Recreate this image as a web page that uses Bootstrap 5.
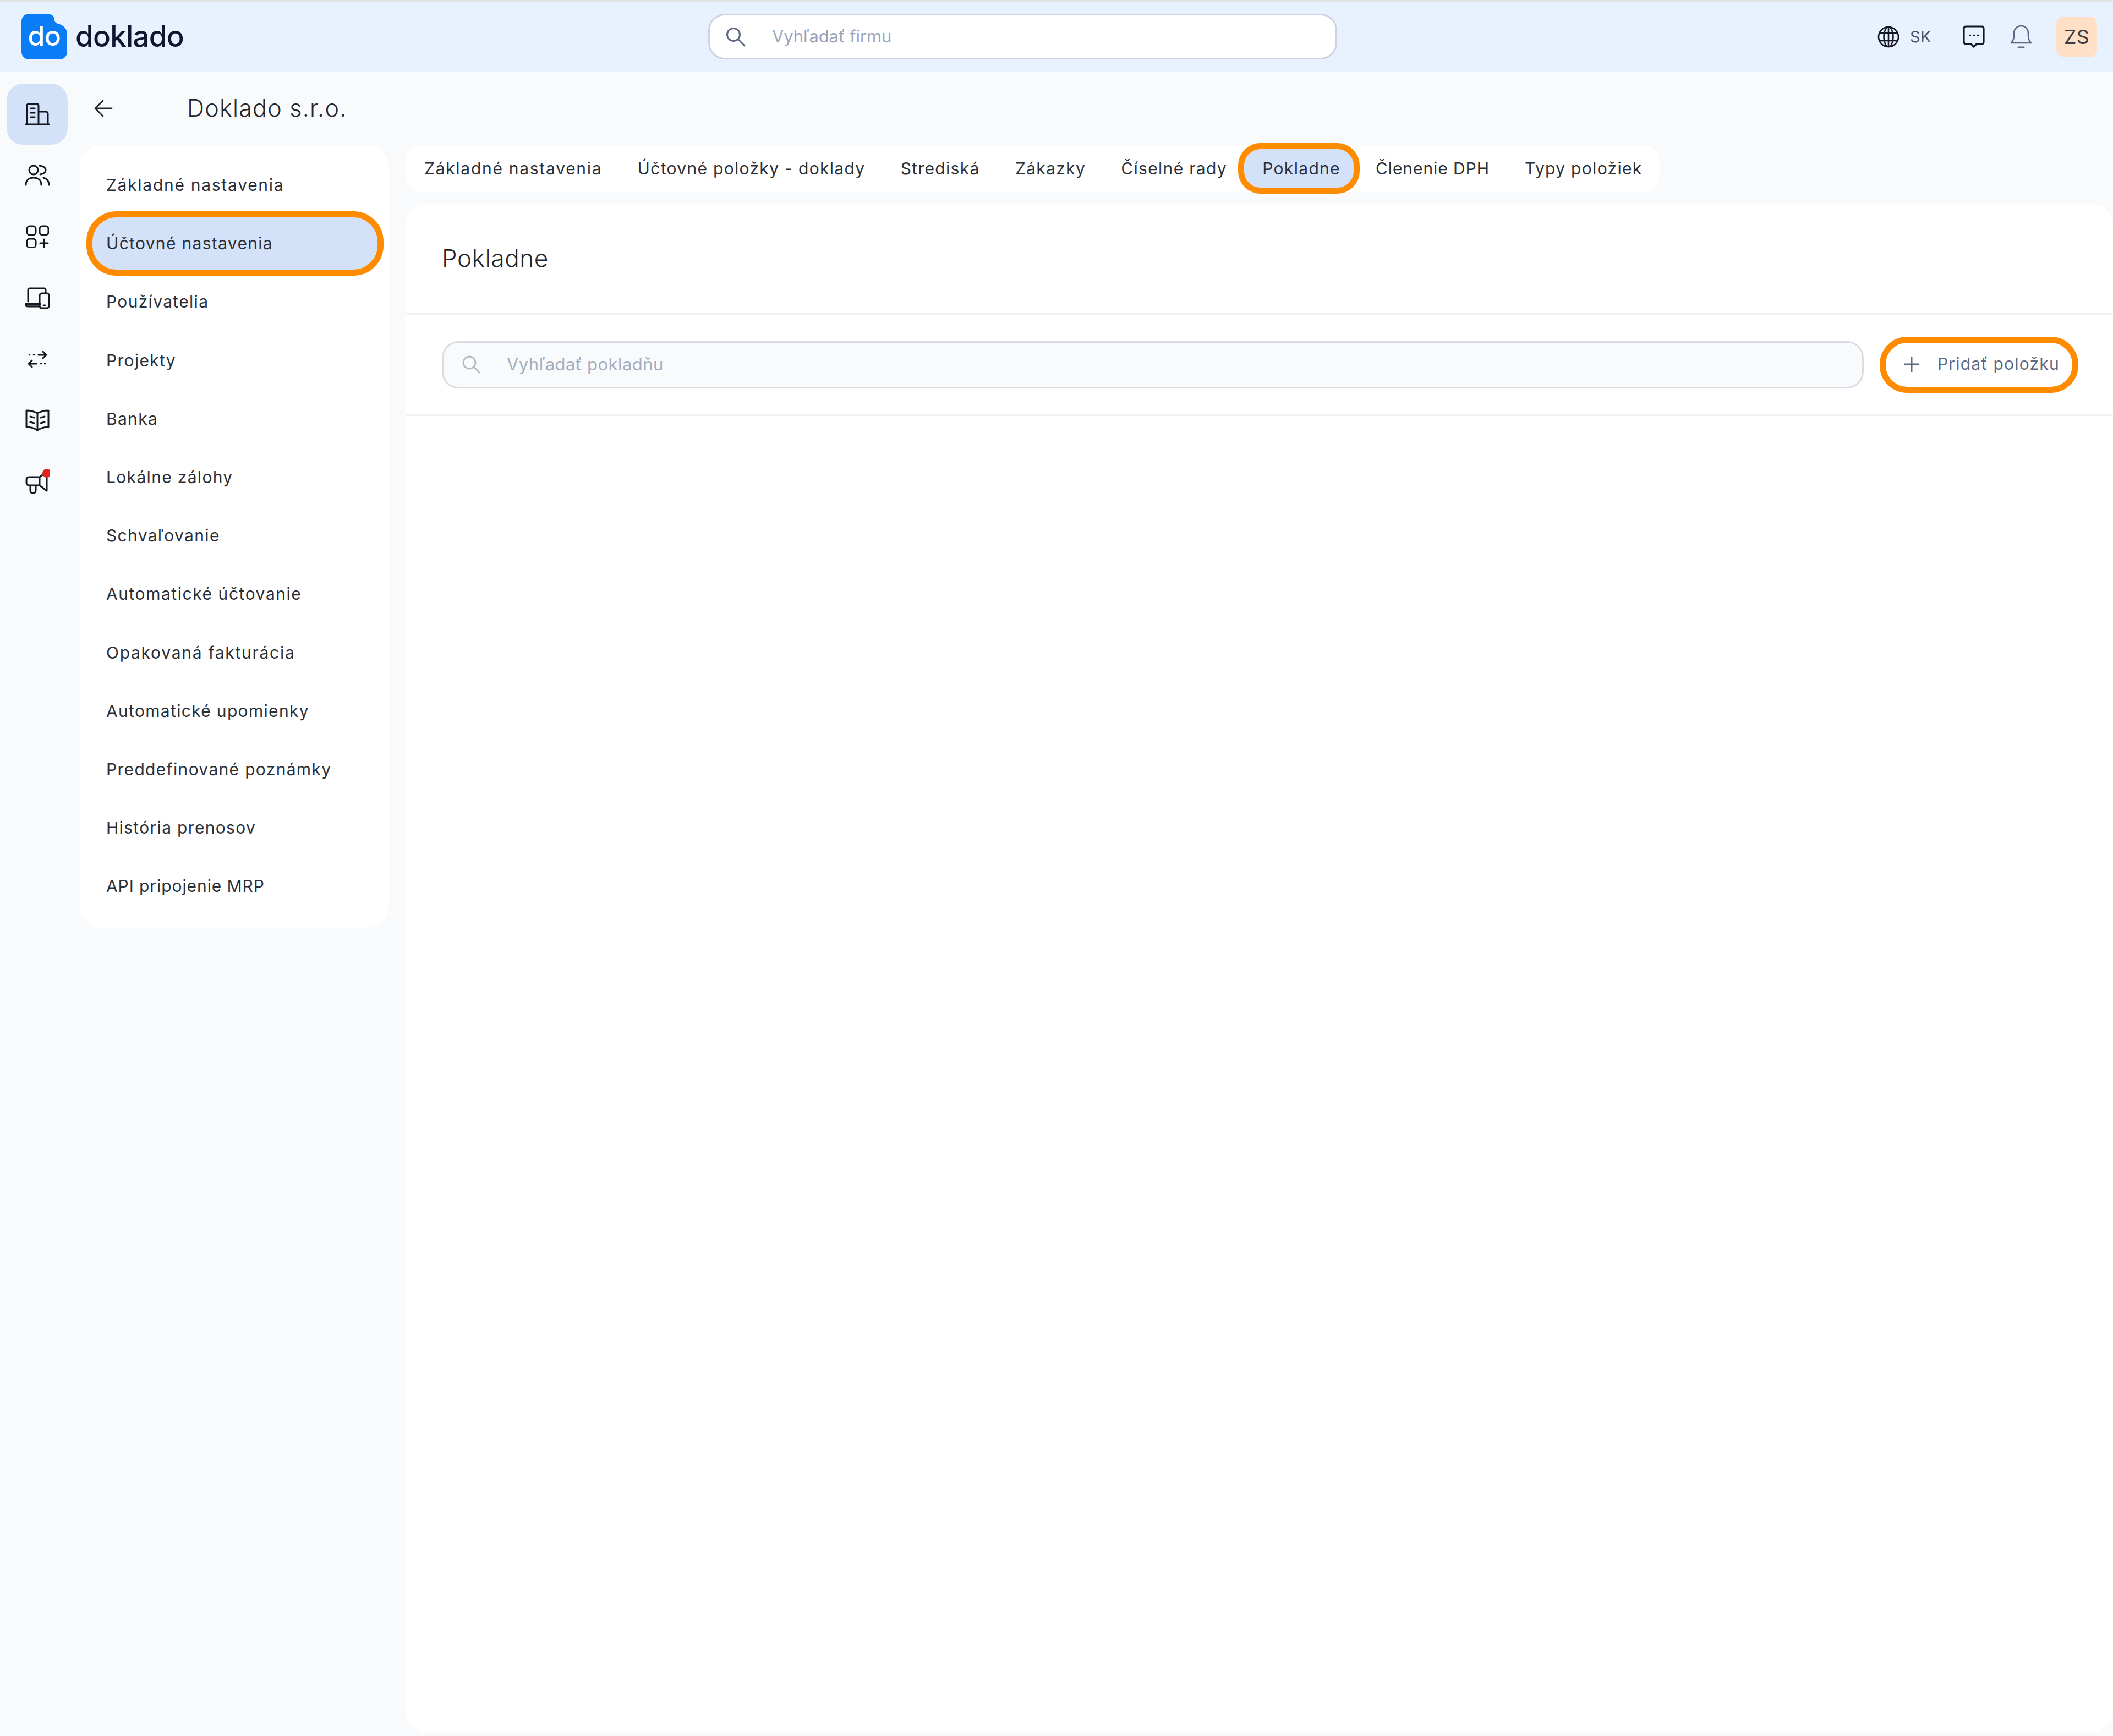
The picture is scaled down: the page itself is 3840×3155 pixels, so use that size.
<!DOCTYPE html>
<html lang="sk">
<head>
<meta charset="utf-8">
<title>Doklado</title>
<link href="https://cdn.jsdelivr.net/npm/bootstrap@5.3.0/dist/css/bootstrap.min.css" rel="stylesheet">
<style>
html,body{height:100%;overflow:hidden}
body{background:#f8fafc;font-family:"Inter","Liberation Sans",sans-serif;color:#2b2f38;border-top:3px solid #e3e4e6}
.topbar{height:127px;background:#e8f2fe;padding:0 29px 0 39px;flex:none}
.brand-box{width:1248px;flex:none}
.brand-name{font-size:53px;font-weight:500;color:#0e1730;letter-spacing:-.8px;margin-left:15px;line-height:1}
.head-search{width:1143px;height:83px;flex:none;background:#fff;border:3px solid #cdd3e2;border-radius:30px;padding:0 29px}
.head-search input,.cash-search input{border:0;outline:0;background:transparent;flex:1;min-width:0;font-size:31px;font-family:inherit}
.head-search input{margin-left:46px;color:#9aa3ba;letter-spacing:-.1px}
.head-search input::placeholder{color:#9aa3ba;opacity:1}
.lang-code{font-size:29px;color:#4d5468;margin-left:19px;margin-right:57px;letter-spacing:.5px}
.bell-mark{margin-left:46px}
.user-tile{width:74px;height:74px;background:#ffe0c7;border-radius:14px;font-size:36px;color:#3b3d42;margin-left:44px;letter-spacing:.5px}
.page-row{flex:1;min-height:0}
.rail{width:145px;flex:none;padding:22px 0 0 12px}
.rail-tile{width:111px;height:111.3px;border-radius:30px;color:#14171f}
.rail-tile.is-current{background:#d4e2f9}
.rail-tile svg{fill:none;stroke:currentColor;stroke-width:3;stroke-linecap:round;stroke-linejoin:round}
.work{flex:1;min-width:0}
.title-row{height:133px;flex:none;padding-left:26px}
.title-text{font-size:43px;font-weight:300;letter-spacing:1.25px;margin:0 0 0 135px;color:#23262e}
.side-panel{width:562px;height:1423px;flex:none;background:#fff;border-radius:40px;padding:26px 21px 0 23px;margin-right:31px}
.side-panel .nav-link,.tab-strip .nav-link{color:#2b2f38;font-size:30px;letter-spacing:1.32px;white-space:nowrap;padding:0}
.side-panel .nav-link{height:95px;margin-bottom:11.2px;line-height:95px;padding-left:25px;border-radius:44px}
.nav-pills .nav-link.active{background:#d4e2f9;color:#2b2f38;outline:11px solid #ff8c00}
.side-panel .nav-link.wide-set,.tab-strip .nav-link.wide-set{letter-spacing:1.72px}
.side-panel .nav-link.mid-set{letter-spacing:1.55px}
.side-panel .nav-link.tight-set,.tab-strip .nav-link.tight-set{letter-spacing:.92px}
.right-col{flex:1;min-width:0;padding-bottom:7px}
.tab-strip{align-self:flex-start;height:86px;background:#fff;border-radius:30px;align-items:center;margin-bottom:21px;flex-wrap:nowrap}
.tab-strip .nav-link{height:70px;line-height:70px;padding:0 31.2px 0 33px;border-radius:30px}
.tab-strip .nav-link.active{padding-right:24px;margin-right:7px}
.main-panel{flex:1;border:0;border-radius:40px;background:#fff;overflow:visible}
.panel-head{height:202px;border-bottom:3px solid #f2f3f5;padding-left:65px}
.panel-title{font-size:44px;font-weight:300;letter-spacing:.6px;margin:0;color:#23262e}
.panel-tools{height:184px;border-bottom:3px solid #f2f3f5;padding:0 63px 0 65px}
.cash-search{flex:1;height:86px;background:#f8fafc;border:3px solid #dadee4;border-radius:30px;padding:0 34px}
.cash-search input{margin-left:46px;color:#a3acbf;letter-spacing:.45px}
.cash-search input::placeholder{color:#a3acbf;opacity:1}
.add-btn{width:361px;height:102px;margin-left:29px;background:#fff;border:11px solid #ff8c00;border-radius:50px;color:#5f6883;font-size:30px;letter-spacing:1.2px;padding:0 0 2px 33px;flex:none;white-space:nowrap;--bs-btn-hover-border-color:#ff8c00;--bs-btn-hover-bg:#fff;--bs-btn-hover-color:#5f6883}
.add-btn svg{margin-right:33px}
</style>
</head>
<body class="d-flex flex-column">
<header class="topbar d-flex align-items-center">
  <div class="brand-box d-flex align-items-center">
    <svg width="83" height="83" viewBox="0 0 83 83"><path d="M14 0H47C55 0 60 5 60 11C60 15 63 17 66 18C76 20 83 27 83 37V69C83 77 77 83 69 83H14C6 83 0 77 0 69V14C0 6 6 0 14 0Z" fill="#0a7cf5"/><text x="41.5" y="58" text-anchor="middle" font-family="Inter, sans-serif" font-size="50" font-weight="500" letter-spacing="-.5" fill="#fff">do</text></svg>
    <span class="brand-name">doklado</span>
  </div>
  <div class="head-search d-flex align-items-center">
    <svg width="36" height="36" viewBox="0 0 36 36" fill="none" stroke="#5f6883" stroke-width="3" stroke-linecap="round"><circle cx="14" cy="14" r="11.5"/><path d="M23 23L34 34"/></svg>
    <input type="text" placeholder="Vyhľadať firmu" aria-label="Vyhľadať firmu">
  </div>
  <div class="ms-auto d-flex align-items-center">
    <svg width="40" height="40" viewBox="0 0 40 40" fill="none" stroke="#14171f" stroke-width="2.6"><circle cx="20" cy="20" r="18"/><ellipse cx="20" cy="20" rx="8.5" ry="18"/><path d="M20 2V38M3.5 13H36.5M3.5 27H36.5"/></svg>
    <span class="lang-code">SK</span>
    <svg width="40" height="42" viewBox="0 0 40 42" fill="none" stroke="#14171f" stroke-width="3.2" stroke-linejoin="round"><path d="M6 2H34Q38 2 38 6V30Q38 34 34 34H25L20 39L15 34H6Q2 34 2 30V6Q2 2 6 2Z"/><path d="M13 18H14M20 18H21M27 18H28" stroke-linecap="round" stroke-width="2.4"/></svg>
    <svg class="bell-mark" width="40" height="43" viewBox="0 0 40 43" fill="none" stroke="#5f6883" stroke-width="2.6" stroke-linecap="round" stroke-linejoin="round"><path d="M2 33C6 29 7 25 7 16C7 7 13 2 20 2C27 2 33 7 33 16C33 25 34 29 38 33Z"/><path d="M15 41H25" stroke-width="3"/></svg>
    <div class="user-tile d-flex align-items-center justify-content-center">ZS</div>
  </div>
</header>

<div class="page-row d-flex">
  <nav class="rail d-flex flex-column" aria-label="Hlavné menu">
    <a class="rail-tile is-current d-flex align-items-center justify-content-center" href="#" aria-label="Firmy">
      <svg width="44" height="40" viewBox="0 0 44 40"><path d="M1 38H43M3 38V4Q3 1 6 1H21Q24 1 24 4V38M24 15H37Q41 15 41 19V38M10 9H17M10 17H17M10 25H17"/></svg>
    </a>
    <a class="rail-tile d-flex align-items-center justify-content-center" href="#" aria-label="Používatelia">
      <svg width="44" height="38" viewBox="0 0 44 38"><circle cx="15" cy="9" r="8"/><path d="M26 1C34 2 37 6 37 9C37 13 33 16 27 17M1 36C1 27 7 23 15 23C23 23 29 27 29 36M33 23C39 25 43 29 43 36"/></svg>
    </a>
    <a class="rail-tile d-flex align-items-center justify-content-center" href="#" aria-label="Moduly">
      <svg width="42" height="42" viewBox="0 0 42 42"><rect x="2" y="2" width="16" height="16" rx="5"/><rect x="25" y="2" width="16" height="16" rx="5"/><rect x="2" y="25" width="16" height="16" rx="5"/><path d="M33 26V40M26 33H40"/></svg>
    </a>
    <a class="rail-tile d-flex align-items-center justify-content-center" href="#" aria-label="Zariadenia">
      <svg width="44" height="40" viewBox="0 0 44 40"><path d="M5 26V5Q5 2 8 2H34Q37 2 37 5V10M26 30H4Q1 30 1 32.5Q1 35 4 35H26"/><path d="M2 31H26" stroke-width="5"/><rect x="26" y="11" width="17" height="27" rx="4"/><path d="M33 33H36"/></svg>
    </a>
    <a class="rail-tile d-flex align-items-center justify-content-center" href="#" aria-label="Prenosy">
      <svg width="36" height="32" viewBox="0 0 36 32"><path d="M20 8H34M28 2L34 8L28 14M2 24H16M8 18L2 24L8 30"/><path d="M3 8H4M11 8H12M24 24H25M31 24H32" stroke-width="2.6"/></svg>
    </a>
    <a class="rail-tile d-flex align-items-center justify-content-center" href="#" aria-label="Príručka">
      <svg width="44" height="40" viewBox="0 0 44 40"><path d="M22 7Q13 2 2 2V32Q13 32 22 38Q31 32 42 32V2Q31 2 22 7ZM22 7V38M9 13L16 15M9 23L16 25M35 13L28 15M35 23L28 25"/></svg>
    </a>
    <a class="rail-tile d-flex align-items-center justify-content-center position-relative" href="#" aria-label="Novinky">
      <svg width="44" height="46" viewBox="0 0 44 46"><path d="M26 15H7Q2 15 2 20V25Q2 30 7 30H26ZM26 15L39 5V40L26 30M9 30V39Q9 44 14 44Q19 44 19 39V30"/><circle cx="39" cy="8" r="8" fill="#e3241b" stroke="none"/></svg>
    </a>
  </nav>

  <div class="work d-flex flex-column">
    <div class="title-row d-flex align-items-center">
      <svg width="34" height="32" viewBox="0 0 34 32" fill="none" stroke="#23262e" stroke-width="2.8" stroke-linecap="round" stroke-linejoin="round"><path d="M32 16H3M16 2L2 16L16 30"/></svg>
      <h1 class="title-text">Doklado s.r.o.</h1>
    </div>
    <div class="d-flex flex-grow-1">
      <aside class="side-panel">
        <nav class="nav nav-pills flex-column">
          <a class="nav-link wide-set" href="#">Základné nastavenia</a>
          <a class="nav-link active" href="#">Účtovné nastavenia</a>
          <a class="nav-link" href="#">Používatelia</a>
          <a class="nav-link" href="#">Projekty</a>
          <a class="nav-link" href="#">Banka</a>
          <a class="nav-link" href="#">Lokálne zálohy</a>
          <a class="nav-link" href="#">Schvaľovanie</a>
          <a class="nav-link mid-set" href="#">Automatické účtovanie</a>
          <a class="nav-link wide-set" href="#">Opakovaná fakturácia</a>
          <a class="nav-link" href="#">Automatické upomienky</a>
          <a class="nav-link" href="#">Preddefinované poznámky</a>
          <a class="nav-link" href="#">História prenosov</a>
          <a class="nav-link tight-set" href="#">API pripojenie MRP</a>
        </nav>
      </aside>
      <main class="right-col d-flex flex-column">
        <nav class="tab-strip nav nav-pills">
          <a class="nav-link wide-set" href="#">Základné nastavenia</a>
          <a class="nav-link" href="#">Účtovné položky - doklady</a>
          <a class="nav-link" href="#">Strediská</a>
          <a class="nav-link" href="#">Zákazky</a>
          <a class="nav-link" href="#">Číselné rady</a>
          <a class="nav-link active" href="#">Pokladne</a>
          <a class="nav-link tight-set" href="#">Členenie DPH</a>
          <a class="nav-link" href="#">Typy položiek</a>
        </nav>
        <section class="main-panel card">
          <div class="panel-head d-flex align-items-center">
            <h2 class="panel-title">Pokladne</h2>
          </div>
          <div class="panel-tools d-flex align-items-center">
            <div class="cash-search d-flex align-items-center">
              <svg width="33" height="33" viewBox="0 0 33 33" fill="none" stroke="#b4b9c4" stroke-width="2.8" stroke-linecap="round"><circle cx="13" cy="13" r="11"/><path d="M21 21L31 31"/></svg>
              <input type="text" placeholder="Vyhľadať pokladňu" aria-label="Vyhľadať pokladňu">
            </div>
            <button type="button" class="btn add-btn d-flex align-items-center">
              <svg width="28" height="28" viewBox="0 0 28 28" fill="none" stroke="#5f6883" stroke-width="3" stroke-linecap="round"><path d="M14 1V27M1 14H27"/></svg>
              Pridať položku
            </button>
          </div>
        </section>
      </main>
    </div>
  </div>
</div>
<script src="https://cdn.jsdelivr.net/npm/bootstrap@5.3.0/dist/js/bootstrap.bundle.min.js"></script>
</body>
</html>
